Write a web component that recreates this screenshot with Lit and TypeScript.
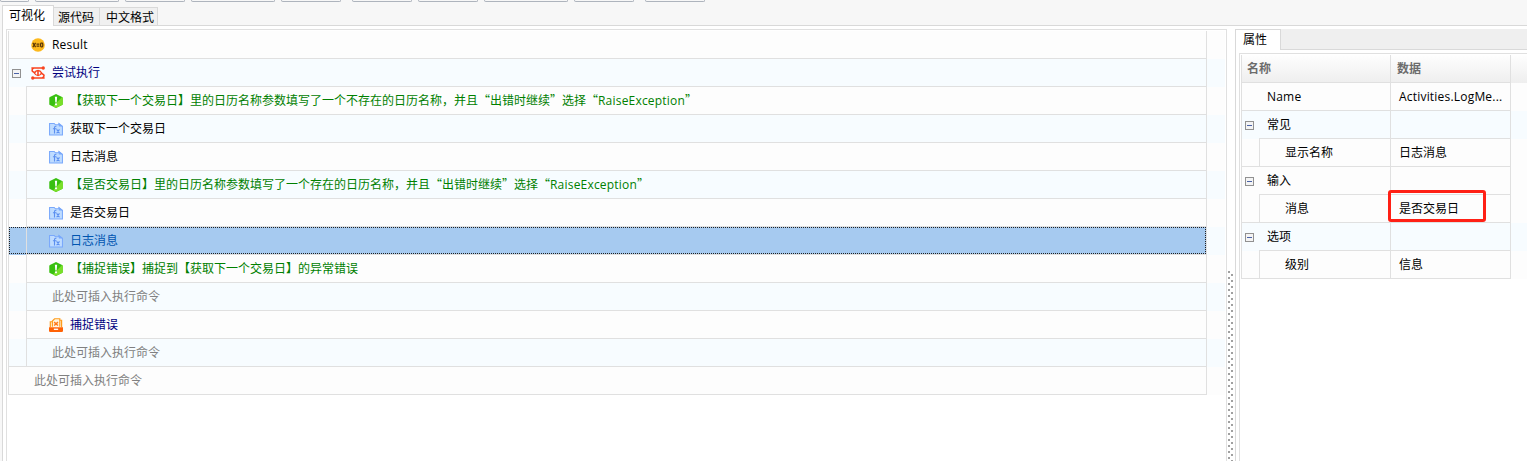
import { LitElement, html, css, svg, nothing } from "lit";
import { customElement, property } from "lit/decorators.js";

type Kind = "var" | "try" | "note" | "fx" | "catch" | "hint";
interface Step { kind: Kind; text: string; level: number; open?: boolean; selected?: boolean; last?: boolean }
interface Prop { name: string; value?: string; level: number; open?: boolean; last?: boolean; plain?: boolean; marked?: boolean }

const STEPS: Step[] = [
  { kind: "var", text: "Result", level: 0 },
  { kind: "try", text: "尝试执行", level: 0, open: true },
  { kind: "note", text: "【获取下一个交易日】里的日历名称参数填写了一个不存在的日历名称，并且“出错时继续”选择“RaiseException”", level: 1 },
  { kind: "fx", text: "获取下一个交易日", level: 1 },
  { kind: "fx", text: "日志消息", level: 1 },
  { kind: "note", text: "【是否交易日】里的日历名称参数填写了一个存在的日历名称，并且“出错时继续”选择“RaiseException”", level: 1 },
  { kind: "fx", text: "是否交易日", level: 1 },
  { kind: "fx", text: "日志消息", level: 1, selected: true },
  { kind: "note", text: "【捕捉错误】捕捉到【获取下一个交易日】的异常错误", level: 1 },
  { kind: "hint", text: "此处可插入执行命令", level: 1 },
  { kind: "catch", text: "捕捉错误", level: 1 },
  { kind: "hint", text: "此处可插入执行命令", level: 1, last: true },
  { kind: "hint", text: "此处可插入执行命令", level: 0 },
];

const PROPS: Prop[] = [
  { name: "Name", value: "Activities.LogMe...", level: 0 },
  { name: "常见", level: 0, open: true },
  { name: "显示名称", value: "日志消息", level: 1, last: true },
  { name: "输入", level: 0, open: true, plain: true },
  { name: "消息", value: "是否交易日", level: 1, last: true, marked: true },
  { name: "选项", level: 0, open: true },
  { name: "级别", value: "信息", level: 1, last: true },
];

const TOOL_BUTTONS = [[0, 29], [6, 84], [6, 60], [6, 84], [6, 60], [11, 60], [6, 60], [6, 84], [6, 60], [11, 60]];

/* Latin runs use a humanist sans; everything else, quotes included, keeps full-width CJK metrics. */
const mixed = (text: string) =>
  text.split(/([A-Za-z.]+)/).map((part) => (/^[A-Za-z.]/.test(part) ? html`<span class="latin">${part}</span>` : part));

const minus = html`<svg class="minus" width="9" height="9" viewBox="0 0 9 9" shape-rendering="crispEdges">
  <rect x="0.5" y="0.5" width="8" height="8" fill="#f4f4f4" stroke="#919191"></rect>
  <path d="M2 4.5H7" stroke="#4b63a7"></path></svg>`;

const glyph = {
  var: svg`<circle cx="7.5" cy="7.5" r="7.3" fill="#fdb91d"/>
    <path d="M2 5.2 4.9 9.8M4.9 5.2 2 9.8M5.9 6.6H9M5.9 8.6H9" stroke="#5b3606" stroke-width="1.3" fill="none"/>
    <rect x="10.3" y="5.5" width="2.3" height="4" rx=".8" fill="none" stroke="#5b3606" stroke-width="1.3"/>`,
  try: svg`<g fill="none" stroke="#f9431f" stroke-width="1.7">
    <path d="M.4 2.2H12M3 2.2C.6 3.2 .6 5.7 2.7 6.5L4.6 7.4M14.6 12.8H3M12 12.8C14.6 11.6 14.5 9.3 12.4 8.5L10.5 7.5"/>
    <path d="M3.6 7.5C5.6 3.9 9.5 3.9 11.4 7.5 9.5 11.1 5.6 11.1 3.6 7.5Z" stroke-width="1.4"/></g>
    <path d="M7.5 5.4V9.6" stroke="#f9431f" stroke-width="1.7"/>
    <circle cx="13.1" cy="2.2" r="1.8" fill="#f9431f"/><circle cx="1.9" cy="12.8" r="1.8" fill="#f9431f"/>`,
  note: svg`<path d="M7.5 0 14 3.2Q14.7 3.6 14.7 4.4V10.6Q14.7 11.4 14 11.8L7.5 15 1 11.8Q.3 11.4 .3 10.6V4.4Q.3 3.6 1 3.2Z" fill="#38c010"/>
    <path d="M14 3.2Q14.7 3.6 14.7 4.4V10.6Q14.7 11.4 14 11.8L7.5 15 4.2 13.4Z" fill="#79df29"/>
    <path d="M6.3 3H8.7L8.2 9H6.8Z" fill="#fff"/><circle cx="7.5" cy="11.1" r="1.2" fill="#fff"/>`,
  fx: svg`<path d="M.6 1.6H5.6L6.8 3H10.6V1.6L14.4 4.6V13.9H.6Z" fill="#bfdcff" stroke="#79a8fb" stroke-width="1.1"/>
    <path d="M10.5 1.2 14.8 4.8H10.5Z" fill="#79a8fb"/>
    <path d="M8 4.6C6.2 4.3 5.9 5.2 5.9 6.4V12.2M4.2 7.2H8M8.2 7.9 11.2 12.1M11.2 7.9 8.2 12.1" fill="none" stroke="#5b8ff0" stroke-width="1.2"/>`,
  catch: svg`<path d="M3.6 9.5V3.2L6 .8H11.6V9.5M1.4 9.8V4H3.6M11.6 2.4H13.5V9.8" fill="#fff4df" stroke="#ff9c1b" stroke-width="1.3"/>
    <path d="M5.5 4.4 9.6 8M9.6 4.4 5.5 8" stroke="#ff7a1a" stroke-width="1.5"/>
    <path d="M0 9.8H15V13.6Q15 15 13.6 15H1.4Q0 15 0 13.6Z" fill="#ff6205"/>
    <path d="M5.2 12.1H9.8" stroke="#fff" stroke-width="1.4"/>`,
};

const shared = css`
  :host { display: block; font: 12px/16px "Noto Sans CJK SC", sans-serif; color: #000; }
  * { box-sizing: border-box; }
  .latin { font-family: "Open Sans", "Noto Sans", sans-serif; letter-spacing: 0.2px; line-height: 1; }
  .row { display: flex; height: 28px; background: #fdfdfd; position: relative; }
  .row.tint { background: #f7fcff; }
  .gutter { flex: none; width: 17px; border-bottom: 1px solid #e0e0e0; padding: 10px 0 0 3px; }
  .gutter.through { border-bottom-color: transparent; }
  .minus { display: block; }
`;

@customElement("step-list")
export class StepList extends LitElement {
  static styles = [shared, css`
    .list { border-left: 1px solid #e0e0e0; padding-right: 1px; }
    .body { flex: none; width: 1181px; display: flex; align-items: flex-start; border: solid #e0e0e0; border-width: 0 1px 1px 0; padding: 5px 0 0 5px; white-space: pre; }
    .body.nested { border-left: 1px solid #e0e0e0; padding-left: 22px; }
    .icon { flex: none; width: 14px; height: 14px; margin: 2px 7px 0 0; }
    .hint .body { color: #808080; padding-left: 8px; }
    .hint .body.nested { padding-left: 25px; }
    .note .body { color: #008000; }
    .try .body, .catch .body { color: #000080; }
    .selected .gutter, .selected .body { background: #a6caf0; }
    .selected .body { color: #0055b0; }
    .focus { position: absolute; left: 0; top: 0; width: 1197px; height: 27px; border: 1px dotted #222; }
  `];
  render() {
    return html`<div class="list">${STEPS.map((s, i) => html`
      <div class="row ${s.kind} ${i % 2 ? "tint" : ""} ${s.selected ? "selected" : ""}">
        <div class="gutter ${s.open || (s.level && !s.last) ? "through" : ""}">${s.open ? minus : nothing}</div>
        <div class="body ${s.level ? "nested" : ""}">${s.kind === "hint" ? nothing : html`<svg class="icon" viewBox="0 0 15 15">${glyph[s.kind]}</svg>`}<span>${mixed(s.text)}</span></div>
        ${s.selected ? html`<div class="focus"></div>` : nothing}
      </div>`)}</div>`;
  }
}

@customElement("property-grid")
export class PropertyGrid extends LitElement {
  static styles = [shared, css`
    .grid { border-left: 1px solid #e0e0e0; }
    .head { display: flex; height: 28px; background: linear-gradient(#fefefe, #eeeeee); color: #6c6c6c; font-weight: 700; }
    .head span { border: solid #e0e0e0; border-width: 0 1px 1px 0; padding: 5px 0 0 5px; }
    .head .c1 { width: 149px; }
    .head .c2 { width: 120px; padding-left: 6px; }
    .name { flex: none; width: 132px; border: solid #e0e0e0; border-width: 0 1px 1px 0; padding: 5px 0 0 8px; }
    .name.nested { border-left: 1px solid #e0e0e0; padding-left: 25px; }
    .value { flex: none; width: 120px; border: solid #e0e0e0; border-width: 0 1px 1px 0; padding: 5px 0 0 8px; white-space: nowrap; }
    .mark { position: absolute; left: 146px; top: -5px; width: 98px; height: 32px; border: 3px solid #ff2015; border-radius: 3px; z-index: 1; }
  `];
  render() {
    return html`<div class="grid">
      <div class="head"><span class="c1">名称</span><span class="c2">数据</span></div>
      ${PROPS.map((p) => html`
        <div class="row ${p.open && !p.plain ? "tint" : ""}">
          <div class="gutter ${p.open || (p.level && !p.last) ? "through" : ""}">${p.open ? minus : nothing}</div>
          <div class="name ${p.level ? "nested" : ""}">${mixed(p.name)}</div>
          <div class="value">${mixed(p.value ?? "")}</div>
          ${p.marked ? html`<div class="mark"></div>` : nothing}
        </div>`)}
    </div>`;
  }
}

@customElement("app-root")
export class AppRoot extends LitElement {
  @property() active = "可视化";
  static styles = css`
    :host { display: flex; flex-direction: column; height: 461px; overflow: hidden; background: #f7f7f7; font: 12px/16px "Noto Sans CJK SC", sans-serif; color: #000; }
    * { box-sizing: border-box; }
    .tools { display: flex; height: 2px; flex: none; }
    .tool { flex: none; height: 2px; border: 1px solid #aeb4bd; border-top: 0; border-radius: 0 0 2px 2px; }
    .tabs { display: flex; flex: none; height: 24px; padding: 3px 0 0 2px; align-items: flex-end; }
    .tab { flex: none; height: 19px; border: 1px solid #d9d9d9; border-left: 0; background: #f0f0f0; padding: 1px 0 0 4px; width: 46px; }
    .tab.wide { width: 58px; padding-left: 6px; }
    .tab.on { height: 21px; width: 52px; background: #fff; border-left: 1px solid #d9d9d9; border-bottom: 0; padding: 1px 0 0 6px; }
    .rule { flex: 1; height: 1px; background: #d9d9d9; }
    .page { flex: 1; display: flex; min-height: 0; margin-left: 2px; border-left: 1px solid #d9d9d9; background: #fff; padding: 3px 0 0 3px; }
    .left { flex: none; width: 1221px; border: 1px solid #e0e0e0; border-bottom: 0; padding: 1px 0 0 1px; }
    .splitter { flex: none; width: 8px; padding: 242px 0 0 1px; }
    .right { flex: 1; display: flex; flex-direction: column; min-width: 0; border-left: 1px solid #d9d9d9; }
    .caption { display: flex; flex: none; height: 21px; background: #efefef; }
    .title { width: 45px; border: solid #d9d9d9; border-width: 1px 1px 0 0; background: #fff; padding: 1px 0 0 7px; }
    .fill { flex: 1; border-bottom: 1px solid #d9d9d9; }
    .panel { flex: 1; margin: 3px 0 0 3px; border: solid #e0e0e0; border-width: 1px 0 0 1px; padding: 1px 0 0 1px; }
  `;
  render() {
    return html`
      <div class="tools">${TOOL_BUTTONS.map(([gap, width]) => html`<div class="tool" style="margin-left:${gap}px;width:${width}px"></div>`)}</div>
      <div class="tabs">
        <div class="tab on">${this.active}</div><div class="tab">源代码</div><div class="tab wide">中文格式</div><div class="rule"></div>
      </div>
      <div class="page">
        <div class="left"><step-list></step-list></div>
        <div class="splitter"><svg width="5" height="190" shape-rendering="crispEdges" fill="#a0a0a0">
          ${Array.from({ length: 32 }, (_, i) => svg`<rect x="0" y=${i * 6} width="2" height="2"/><rect x="3" y=${i * 6 + 3} width="2" height="2"/>`)}
        </svg></div>
        <div class="right">
          <div class="caption"><div class="title">属性</div><div class="fill"></div></div>
          <div class="panel"><property-grid></property-grid></div>
        </div>
      </div>`;
  }
}
